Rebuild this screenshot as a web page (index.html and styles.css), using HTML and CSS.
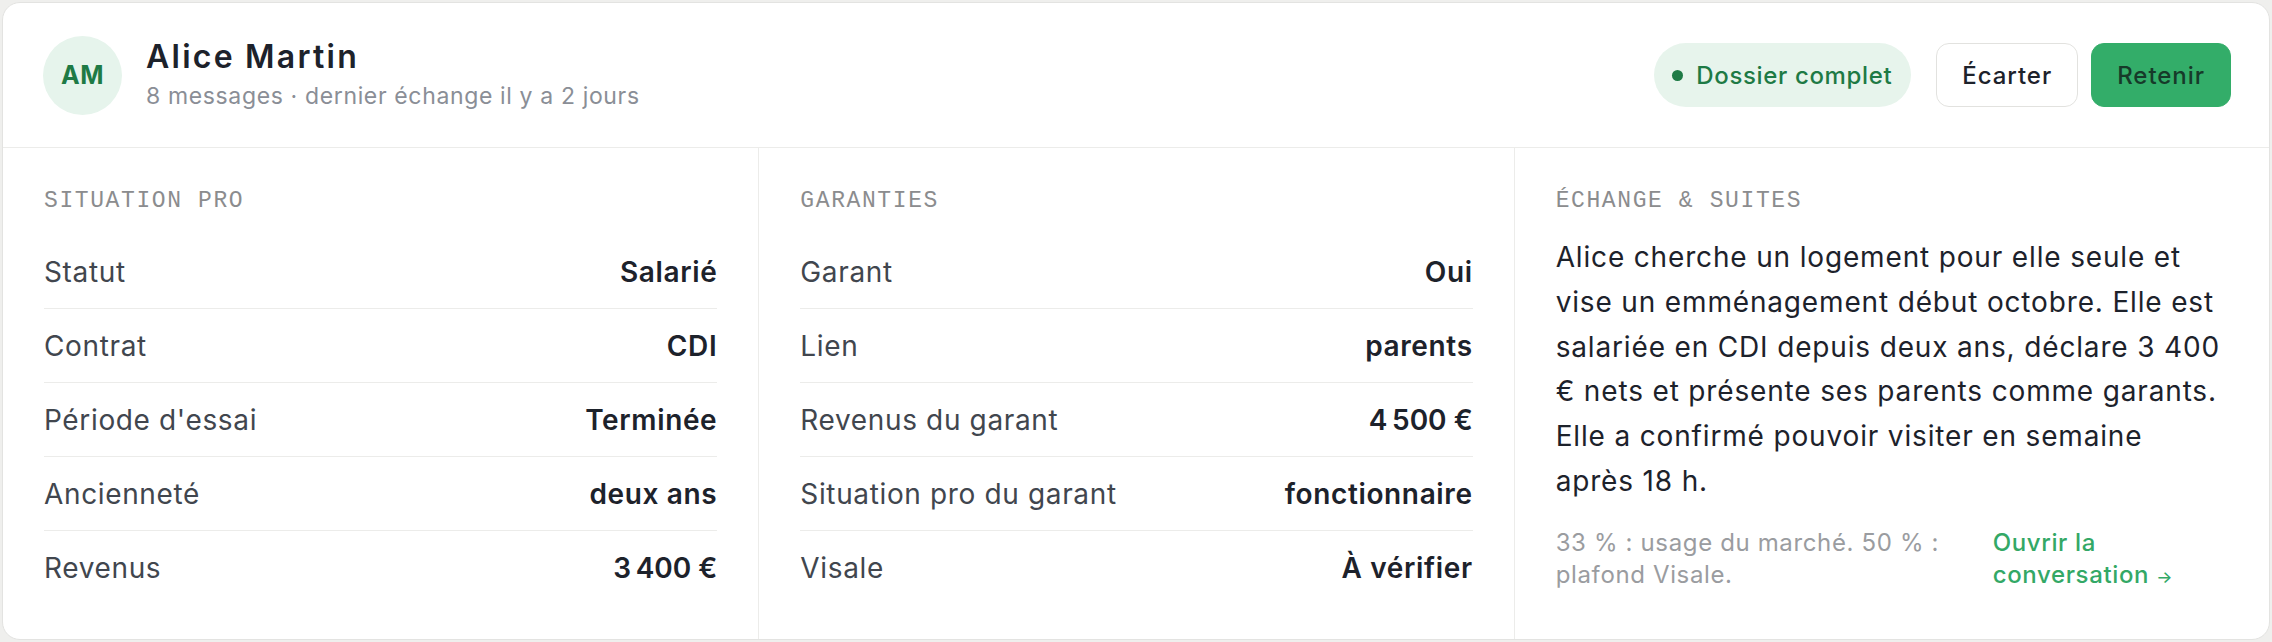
FILE: index.html
```html
<!DOCTYPE html>
<html lang="fr">
<head>
<meta charset="utf-8">
<title>Alice Martin</title>
<link rel="stylesheet" href="styles.css">
</head>
<body>
<div class="card">
  <header class="head">
    <div class="who">
      <div class="avatar">AM</div>
      <div class="ident">
        <div class="name">Alice Martin</div>
        <div class="meta">8 messages · dernier échange il y a 2 jours</div>
      </div>
    </div>
    <div class="actions">
      <span class="badge"><span class="dot"></span>Dossier complet</span>
      <button class="btn btn-ghost">Écarter</button>
      <button class="btn btn-primary">Retenir</button>
    </div>
  </header>
  <div class="cols">
    <section class="col">
      <h3 class="label">SITUATION PRO</h3>
      <div class="row"><span class="k">Statut</span><span class="v">Salarié</span></div>
      <div class="row"><span class="k">Contrat</span><span class="v">CDI</span></div>
      <div class="row"><span class="k">Période d'essai</span><span class="v">Terminée</span></div>
      <div class="row"><span class="k">Ancienneté</span><span class="v">deux ans</span></div>
      <div class="row"><span class="k">Revenus</span><span class="v">3&#8239;400&nbsp;€</span></div>
    </section>
    <section class="col">
      <h3 class="label">GARANTIES</h3>
      <div class="row"><span class="k">Garant</span><span class="v">Oui</span></div>
      <div class="row"><span class="k">Lien</span><span class="v">parents</span></div>
      <div class="row"><span class="k">Revenus du garant</span><span class="v">4&#8239;500&nbsp;€</span></div>
      <div class="row"><span class="k">Situation pro du garant</span><span class="v">fonctionnaire</span></div>
      <div class="row"><span class="k">Visale</span><span class="v">À vérifier</span></div>
    </section>
    <section class="col">
      <h3 class="label">ÉCHANGE &amp; SUITES</h3>
      <p class="summary">Alice cherche un logement pour elle seule et<br>vise un emménagement début octobre. Elle est<br>salariée en CDI depuis deux ans, déclare 3 400<br>€ nets et présente ses parents comme garants.<br>Elle a confirmé pouvoir visiter en semaine<br>après 18 h.</p>
      <div class="foot">
        <p class="note">33&nbsp;% : usage du marché. 50&nbsp;% : plafond Visale.</p>
        <a class="link" href="#">Ouvrir la conversation&nbsp;<span class="arrow">→</span></a>
      </div>
    </section>
  </div>
</div>
</body>
</html>
```
FILE: styles.css
```css
* { box-sizing: border-box; }
html, body { margin: 0; }
body {
  padding: 2px;
  background: #efefed;
  font-family: Inter, "Noto Sans", sans-serif;
  letter-spacing: 0.04em;
  color: #1d222b;
}
.card {
  background: #fff;
  border: 1px solid #e3e3e1;
  border-radius: 18px;
  overflow: hidden;
}
.head {
  height: 145px;
  padding: 0 38px 0 40px;
  display: flex;
  align-items: center;
  justify-content: space-between;
  border-bottom: 1px solid #ececea;
}
.who { display: flex; align-items: center; gap: 24px; }
.avatar {
  width: 79px; height: 79px;
  border-radius: 50%;
  background: #e6f4ec;
  color: #1e7a45;
  font-weight: 700;
  font-size: 25px;
  letter-spacing: 0.02em;
  display: flex; align-items: center; justify-content: center;
}
.ident { display: flex; flex-direction: column; }
.name { font-size: 32px; font-weight: 600; line-height: 40px; color: #1d222b; letter-spacing: 0.07em; }
.meta { font-size: 23px; line-height: 34px; color: #8a8e96; margin-top: 2px; }
.actions { display: flex; align-items: center; gap: 13px; }
.badge {
  height: 64px;
  padding: 0 19px 0 18px;
  border-radius: 32px;
  background: #e7f4ec;
  color: #1e7a45;
  font-size: 24px;
  font-weight: 500;
  display: inline-flex; align-items: center; gap: 13px;
  margin-right: 12px;
}
.dot { width: 11px; height: 11px; border-radius: 50%; background: #1e7a45; }
.btn {
  height: 64px;
  padding: 0 25px;
  border-radius: 13px;
  font-family: inherit;
  font-size: 24px;
  font-weight: 500;
  letter-spacing: 0.04em;
  cursor: pointer;
}
.btn-ghost { background: #fff; border: 1.5px solid #e2e2df; color: #1d222b; }
.btn-primary { background: #33ad69; border: 1.5px solid #33ad69; color: #163a29; }
.cols { display: grid; grid-template-columns: 1fr 1fr 1fr; }
.col { padding: 40px 41px 35px 41px; }
.col + .col { border-left: 1px solid #ececea; }
.label {
  margin: 0 0 21px;
  font-family: "Liberation Mono", "DejaVu Sans Mono", monospace;
  font-weight: 400;
  font-size: 23px;
  letter-spacing: 1.6px;
  line-height: 26px;
  color: #8b8c8e;
}
.row {
  height: 74px;
  display: flex; align-items: center; justify-content: space-between;
  border-bottom: 1px solid #ececea;
  font-size: 28px;
}
.row:last-child { border-bottom: 0; height: 73px; }
.k { color: #41464e; }
.v { color: #1d222b; font-weight: 560; }
.summary {
  margin: 0;
  font-size: 28px;
  line-height: 44.8px;
  letter-spacing: 0.03em;
  color: #1d222b;
}
.foot { display: flex; gap: 37px; margin-top: 23px; align-items: flex-start; }
.note { margin: 0; flex: 0 0 400px; font-size: 24px; line-height: 32px; color: #9a9ca0; }
.link { flex: 0 1 234px; font-size: 24px; line-height: 32px; font-weight: 500; color: #33a866; text-decoration: none; }
.arrow { font-size: 17px; }
```
